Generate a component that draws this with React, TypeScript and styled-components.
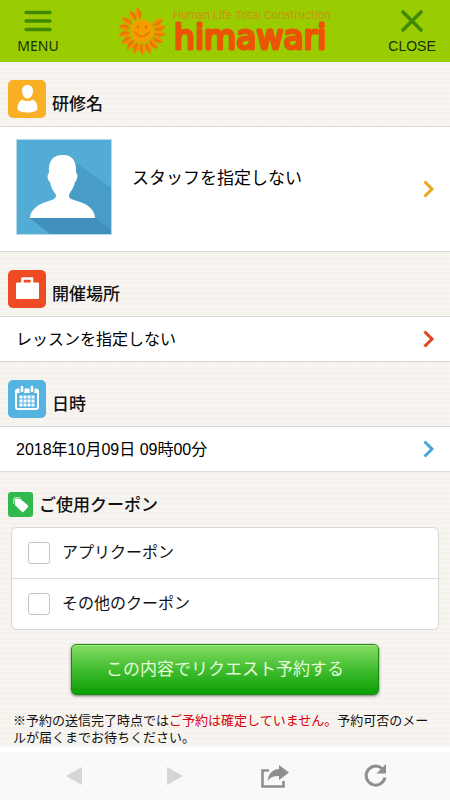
import React from "react";
import styled, { createGlobalStyle } from "styled-components";

const GlobalStyle = createGlobalStyle`
  *, *::before, *::after { box-sizing: border-box; }
  body {
    margin: 0;
    background: #ffffff;
    color: #111111;
    font-family: "Liberation Sans", "Noto Sans CJK JP", sans-serif;
  }
  button, input { font-family: inherit; margin: 0; }
  h1, h2, p, ul { margin: 0; padding: 0; }
`;

const Page = styled.div`
  display: flex;
  flex-direction: column;
  min-height: 100vh;
`;

const Header = styled.header`
  display: grid;
  grid-template-columns: 76px 1fr 76px;
  align-items: center;
  height: 62px;
  background: #99cd02;
`;

const HeaderButton = styled.button<{ $font?: string }>`
  display: flex;
  flex-direction: column;
  align-items: center;
  gap: 5px;
  padding: 2px 0 0;
  border: 0;
  background: none;
  color: #1c2f06;
  font-size: 14px;
  line-height: 18px;

  span { font-family: ${(p) => p.$font ?? "inherit"}; }
`;

const Brand = styled.a`
  display: flex;
  align-items: center;
  justify-content: center;
  gap: 6px;
  color: #ea5504;
  text-decoration: none;
`;

const BrandText = styled.span`
  display: flex;
  flex-direction: column;
`;

const Tagline = styled.span`
  color: #cf8f10;
  font-family: Inter, sans-serif;
  font-size: 11px;
  line-height: 12px;
  white-space: nowrap;
`;

const BrandName = styled.svg`
  display: block;
  overflow: visible;
  font-family: "DejaVu Sans", sans-serif;
  font-size: 33px;
`;

const Content = styled.main`
  flex: 1;
  padding-bottom: 1px;
  background-color: #f6f3ee;
  background-image:
    repeating-linear-gradient(0deg, rgba(255, 255, 255, 0.25) 0 2px, transparent 2px 5px),
    repeating-linear-gradient(90deg, rgba(225, 215, 200, 0.08) 0 1px, transparent 1px 3px);
`;

const SectionHead = styled.div`
  display: flex;
  align-items: center;
  gap: 6px;
  height: 64px;
  padding: 10px 8px 0;
`;

const CouponHead = styled(SectionHead)`
  height: 55px;
`;

const Title = styled.h2<{ $low?: boolean }>`
  padding-top: ${(p) => (p.$low ? "12px" : "2px")};
  font-size: 17px;
  font-weight: 500;
  line-height: 26px;
`;

const Row = styled.button<{ $tall?: boolean }>`
  display: flex;
  align-items: center;
  gap: 20px;
  width: 100%;
  height: ${(p) => (p.$tall ? "126px" : "46px")};
  padding: ${(p) => (p.$tall ? "12px 15px 12px 16px" : "0 15px 0 16px")};
  border: solid #d9d9d9;
  border-width: 1px 0;
  background: #ffffff;
  color: #000000;
  font-size: ${(p) => (p.$tall ? "17px" : "16px")};
  line-height: 24px;
  text-align: left;
`;

const RowText = styled.span<{ $top?: boolean }>`
  flex: 1;
  align-self: ${(p) => (p.$top ? "flex-start" : "center")};
  padding-top: ${(p) => (p.$top ? "28px" : "2px")};
`;

const Photo = styled.span`
  display: flex;
  align-self: flex-start;
`;

const CouponList = styled.ul`
  margin: 0 11px;
  border: 1px solid #d9d7d4;
  border-radius: 6px;
  background: #ffffff;
  list-style: none;
`;

const CouponItem = styled.li`
  & + & { border-top: 1px solid #dcdcdc; }
`;

const CouponLabel = styled.label`
  display: flex;
  align-items: center;
  gap: 12px;
  height: 50px;
  padding-left: 16px;
  font-size: 16px;
  line-height: 24px;
`;

const Checkbox = styled.input`
  appearance: none;
  width: 22px;
  height: 22px;
  border: 1px solid #c4c4c4;
  border-radius: 3px;
  background: #ffffff;

  &:checked { background: #2fb24a; }
`;

const SubmitButton = styled.button`
  display: block;
  width: calc(100% - 142px);
  height: 51px;
  margin: 14px auto 0;
  border: 1px solid #1f8a12;
  border-radius: 5px;
  background: linear-gradient(#84dc62, #42bd30 50%, #0a9f06);
  box-shadow: inset 0 1px 0 rgba(190, 245, 160, 0.6), 0 1px 3px rgba(0, 0, 0, 0.55);
  color: #e4fadb;
  font-size: 17px;
  line-height: 24px;
`;

const Note = styled.p`
  padding: 17px 13px 0;
  font-size: 13px;
  line-height: 17px;

  em { color: #d7000f; font-style: normal; }
`;

const Toolbar = styled.nav`
  display: grid;
  grid-template-columns: repeat(4, 1fr);
  place-items: center;
  height: 53px;
  padding: 0 24px;
  border-top: 5px solid #ffffff;
  background: #f9f9f9;
`;

const ToolButton = styled.button`
  display: flex;
  padding: 0;
  border: 0;
  background: none;
`;

const petalAngles = [-122, -102, -30, -11, 8, 28, 48, 68, 88, 108, 128, 148, 169, -169, -147];

function Sunflower() {
  return (
    <svg width="50" height="50" viewBox="-25 -25 50 50" aria-hidden="true">
      {petalAngles.map((angle) => (
        <g key={angle} transform={`rotate(${angle})`}>
          <path d="M12 0C14 -4 20 -4 24 0C20 4 14 4 12 0Z" fill="#f39000" />
          <path d="M12 0L24 0C20 4 14 4 12 0Z" fill="#e57a00" />
        </g>
      ))}
      <circle r="11.500" fill="#f59c00" />
      <circle cx="-4" cy="-4" r="1.500" fill="#e07800" />
      <circle cx="4" cy="-4" r="1.500" fill="#e07800" />
      <path d="M-7 1Q0 10 7 1" fill="none" stroke="#e07800" strokeWidth="1.500" strokeLinecap="round" />
    </svg>
  );
}

function MenuIcon() {
  return (
    <svg width="28" height="22" viewBox="0 0 28 22" stroke="#418a04" strokeWidth="3.4" strokeLinecap="round" aria-hidden="true">
      <path d="M2 2.5H26M2 11H26M2 19.5H26" />
    </svg>
  );
}

function CloseIcon() {
  return (
    <svg width="22" height="22" viewBox="0 0 22 22" stroke="#418a04" strokeWidth="3.6" strokeLinecap="round" aria-hidden="true">
      <path d="M2 2L20 20M20 2L2 20" />
    </svg>
  );
}

function PersonIcon() {
  return (
    <svg width="38" height="38" viewBox="0 0 38 38" aria-hidden="true">
      <rect width="38" height="38" rx="5" fill="#f9b024" />
      <path d="M19.5 5C23 5 25 7.500 25 11C25 15 22.500 18.500 19.500 18.500S14 15 14 11C14 7.500 16 5 19.500 5Z" fill="#fff" />
      <path d="M14.500 19.500C17 21.500 22 21.500 24.500 19.500C28 21 29.500 24 29.500 29C29.500 31 24 32.500 19.500 32.500S9.500 31 9.500 29C9.500 24 11 21 14.500 19.500Z" fill="#fff" />
    </svg>
  );
}

function BriefcaseIcon() {
  return (
    <svg width="38" height="38" viewBox="0 0 38 38" aria-hidden="true">
      <rect width="38" height="38" rx="5" fill="#ee4b25" />
      <rect x="8" y="12.500" width="23" height="16.500" rx="1" fill="#fff" />
      <path d="M14.500 13V8.500H24V13" fill="none" stroke="#fff" strokeWidth="2.600" strokeLinejoin="round" />
    </svg>
  );
}

function CalendarIcon() {
  return (
    <svg width="38" height="38" viewBox="0 0 38 38" aria-hidden="true">
      <rect width="38" height="38" rx="5" fill="#54b3e0" />
      <rect x="8" y="9.500" width="22" height="19.500" rx="2" fill="none" stroke="#fff" strokeWidth="2" />
      <path d="M8 9.500H30V13H8Z" fill="#fff" />
      <path d="M14 7V11M24 7V11" stroke="#54b3e0" strokeWidth="5" strokeLinecap="round" />
      <path d="M14 7V11M24 7V11" stroke="#fff" strokeWidth="2.600" strokeLinecap="round" />
      {[15.5, 19.5, 23.5].map((y) =>
        [11.5, 15.5, 19.5, 23.5].map((x) => <rect key={`${x}-${y}`} x={x} y={y} width="3" height="3" fill="#fff" />)
      )}
    </svg>
  );
}

function TagIcon() {
  return (
    <svg width="25" height="25" viewBox="0 0 25 25" aria-hidden="true">
      <rect width="25" height="25" rx="3" fill="#31b94e" />
      <path d="M7.500 7L12.500 7.500L19.500 13.500C20 14 20 14.500 19.500 15L15.500 19.500C15 20 14.500 20 14 19.500L7.500 13Z" fill="#fff" stroke="#fff" strokeLinejoin="round" />
      <path d="M5.800 12V6.500Q5.800 5.800 6.500 5.800H12.500" fill="none" stroke="#fff" strokeWidth="0.800" />
    </svg>
  );
}

function Avatar() {
  return (
    <svg width="96" height="96" viewBox="0 0 96 96" role="img" aria-label="スタッフ">
      <rect width="96" height="96" fill="#52acd6" />
      <path d="M60 24L95 49V95H34L14 79L47 60Z" fill="#479dc8" />
      <path d="M14 79H79L95 91V95H34Z" fill="#4190bb" />
      <path d="M46 16C56 15 61 22 60 34C62 34 62 41 59 43C58 49 54 53 53 56C53 60 55 60 61 62C72 65 79 71 79 79H14C14 71 22 65 33 62C39 60 40 59 40 56C38 53 35 49 34 43C31 41 31 35 33 34C32 22 37 16 46 16Z" fill="#fff" />
      <rect x="0.500" y="0.500" width="95" height="95" fill="none" stroke="#b8d8e8" />
    </svg>
  );
}

function Chevron({ color }: { color: string }) {
  return (
    <svg width="12" height="18" viewBox="0 0 12 18" fill="none" stroke={color} strokeWidth="3" aria-hidden="true">
      <path d="M1.500 1.500L9 9L1.500 16.500" />
    </svg>
  );
}

export default function App() {
  return (
    <>
      <GlobalStyle />
      <Page>
        <Header>
          <HeaderButton type="button" $font={'"Noto Sans", sans-serif'}>
            <MenuIcon />
            <span>MENU</span>
          </HeaderButton>
          <Brand href="#">
            <Sunflower />
            <BrandText>
              <Tagline>Human Life Total Construction</Tagline>
              <BrandName width="160" height="32" viewBox="0 0 160 32">
                <text x="1" y="28" fill="#ea5504" stroke="#ea5504" strokeWidth="3" strokeLinejoin="round">
                  himawari
                </text>
              </BrandName>
            </BrandText>
          </Brand>
          <HeaderButton type="button">
            <CloseIcon />
            <span>CLOSE</span>
          </HeaderButton>
        </Header>
        <Content>
          <SectionHead>
            <PersonIcon />
            <Title $low>研修名</Title>
          </SectionHead>
          <Row type="button" $tall>
            <Photo>
              <Avatar />
            </Photo>
            <RowText $top>スタッフを指定しない</RowText>
            <Chevron color="#eba51f" />
          </Row>
          <SectionHead>
            <BriefcaseIcon />
            <Title $low>開催場所</Title>
          </SectionHead>
          <Row type="button">
            <RowText>レッスンを指定しない</RowText>
            <Chevron color="#e0431c" />
          </Row>
          <SectionHead>
            <CalendarIcon />
            <Title $low>日時</Title>
          </SectionHead>
          <Row type="button">
            <RowText>2018年10月09日 09時00分</RowText>
            <Chevron color="#4aa8d8" />
          </Row>
          <CouponHead>
            <TagIcon />
            <Title>ご使用クーポン</Title>
          </CouponHead>
          <CouponList>
            <CouponItem>
              <CouponLabel>
                <Checkbox type="checkbox" />
                アプリクーポン
              </CouponLabel>
            </CouponItem>
            <CouponItem>
              <CouponLabel>
                <Checkbox type="checkbox" />
                その他のクーポン
              </CouponLabel>
            </CouponItem>
          </CouponList>
          <SubmitButton type="button">この内容でリクエスト予約する</SubmitButton>
          <Note>
            ※予約の送信完了時点では<em>ご予約は確定していません。</em>予約可否のメールが届くまでお待ちください。
          </Note>
        </Content>
        <Toolbar aria-label="ブラウザ">
          <ToolButton type="button" aria-label="戻る">
            <svg width="16" height="18" viewBox="0 0 16 18"><path d="M0 9L16 0V18Z" fill="#d6d6d6" /></svg>
          </ToolButton>
          <ToolButton type="button" aria-label="進む">
            <svg width="16" height="18" viewBox="0 0 16 18"><path d="M16 9L0 0V18Z" fill="#d6d6d6" /></svg>
          </ToolButton>
          <ToolButton type="button" aria-label="共有">
            <svg width="28" height="24" viewBox="0 0 28 24">
              <path d="M8 6.500H1.500V22.500H22.500V17" fill="none" stroke="#8e8e8e" strokeWidth="2.600" />
              <path d="M18 1L28 8.500L18 16V12C13 12 9.500 13 6.500 17C7.500 10 11 5.500 18 5Z" fill="#8e8e8e" />
            </svg>
          </ToolButton>
          <ToolButton type="button" aria-label="再読み込み">
            <svg width="24" height="24" viewBox="0 0 24 24">
              <path d="M18 4.500A9.500 9.500 0 1 0 21 13.500" fill="none" stroke="#8e8e8e" strokeWidth="3" />
              <path d="M22 0V9.500H12.500Z" fill="#8e8e8e" />
            </svg>
          </ToolButton>
        </Toolbar>
      </Page>
    </>
  );
}
